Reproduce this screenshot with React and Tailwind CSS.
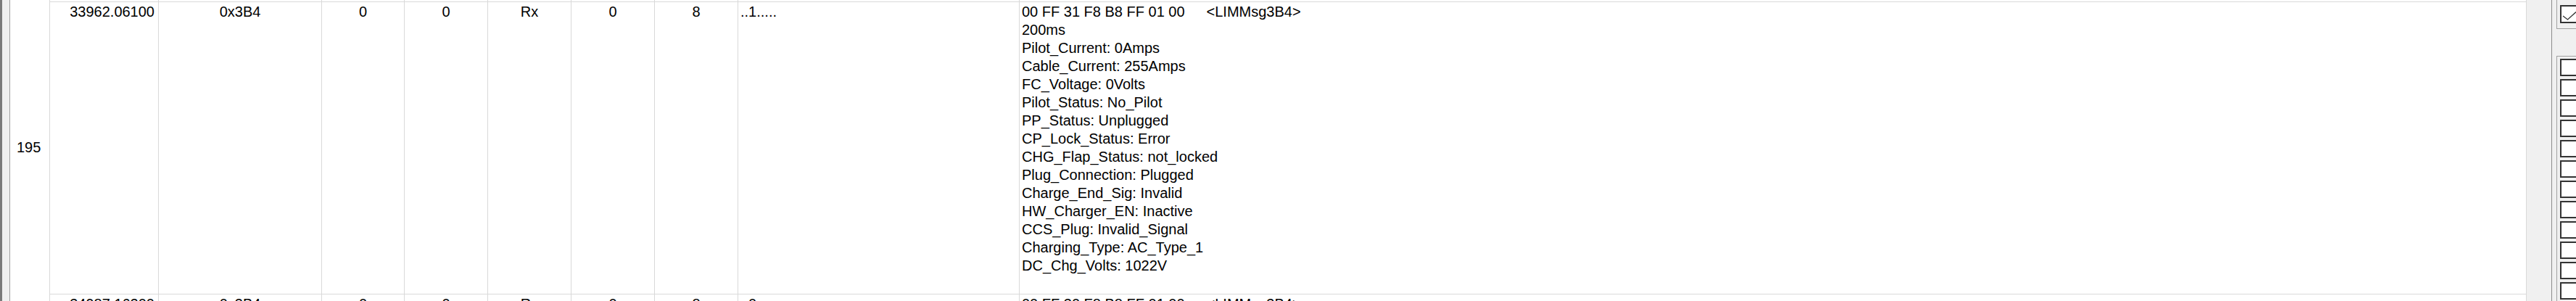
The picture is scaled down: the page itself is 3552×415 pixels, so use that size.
import React from 'react';

const cols = [
  { w: 'w-[150px]', align: 'justify-end pr-[5px]' },
  { w: 'w-[225px]', align: 'justify-center' },
  { w: 'w-[114px]', align: 'justify-center' },
  { w: 'w-[115px]', align: 'justify-center' },
  { w: 'w-[115px]', align: 'justify-center' },
  { w: 'w-[115px]', align: 'justify-center' },
  { w: 'w-[115px]', align: 'justify-center' },
  { w: 'w-[388px]', align: 'justify-start pl-[3px]' },
];

const prevRow = ['', '', '', '', '', '', '', ''];

const row195 = ['33962.06100', '0x3B4', '0', '0', 'Rx', '0', '8', '..1.....'];
const signals = [
  '200ms',
  'Pilot_Current: 0Amps',
  'Cable_Current: 255Amps',
  'FC_Voltage: 0Volts',
  'Pilot_Status: No_Pilot',
  'PP_Status: Unplugged',
  'CP_Lock_Status: Error',
  'CHG_Flap_Status: not_locked',
  'Plug_Connection: Plugged',
  'Charge_End_Sig: Invalid',
  'HW_Charger_EN: Inactive',
  'CCS_Plug: Invalid_Signal',
  'Charging_Type: AC_Type_1',
  'DC_Chg_Volts: 1022V',
];

const row196 = ['34987.16200', '0x3B4', '0', '0', 'Rx', '0', '8', '..0.....'];

function Row({ num, cells, data, height, top = true }) {
  return (
    <div className={`flex shrink-0 ${height}`}>
      {/* row header */}
      <div className="w-[55px] shrink-0 border-r border-[#d9d9d9] flex items-center pl-[9px]">
        {num}
      </div>
      <div className={`flex flex-1 ${top ? 'border-t border-[#d9d9d9]' : ''}`}>
        {cols.map((c, i) => (
          <div
            key={i}
            className={`${c.w} shrink-0 border-r border-[#d9d9d9] flex items-start pt-px ${c.align}`}
          >
            {cells[i]}
          </div>
        ))}
        <div className="flex-1 pl-[3px] pt-px border-r border-[#d9d9d9]">{data}</div>
      </div>
    </div>
  );
}

function Check({ checked, size = 'w-[25px] h-[25px]' }) {
  return (
    <div className={`${size} shrink-0 border-2 border-[#333333] bg-white`}>
      {checked && (
        <svg width="25" height="25" viewBox="0 0 25 25" className="-mt-[2px] -ml-[2px]">
          <polyline points="4,15 10.5,20 22,9.5" fill="none" stroke="#333333" strokeWidth="1.3" />
        </svg>
      )}
    </div>
  );
}

export default function App() {
  return (
    <div
      className="w-[3552px] h-[415px] overflow-hidden flex bg-white text-black text-[20px] leading-[25px]"
      style={{ fontFamily: '"Liberation Sans", Arial, sans-serif' }}
    >
      {/* left frame edge */}
      <div className="flex shrink-0 h-full">
        <div className="w-[3px] bg-[#7a7a7a]" />
        <div className="w-[10px] bg-[#f0f0f0]" />
        <div className="w-px bg-[#a0a0a0]" />
      </div>

      {/* grid */}
      <div className="w-[3470px] shrink-0 flex flex-col">
        <Row num="" cells={prevRow} data="" height="h-[2px]" top={false} />
        <Row
          num="195"
          cells={row195}
          height="h-[403px]"
          data={
            <div>
              <div className="whitespace-pre">
                00 FF 31 F8 B8 FF 01 00<span className="ml-[30px]">&lt;LIMMsg3B4&gt;</span>
              </div>
              {signals.map((s) => (
                <div key={s}>{s}</div>
              ))}
            </div>
          }
        />
        <Row
          num=""
          cells={row196}
          height="h-[40px]"
          data={
            <div className="whitespace-pre">
              00 FF 30 F8 B8 FF 01 00<span className="ml-[30px]">&lt;LIMMsg3B4&gt;</span>
            </div>
          }
        />
      </div>

      {/* right side panel */}
      <div className="flex-1 flex bg-[#f0f0f0] h-full">
        <div className="w-[34px] shrink-0" />
        <div className="w-px bg-[#8c8c8c]" />
        <div className="w-[6px] shrink-0" />
        <div className="flex-1 flex flex-col">
          <div className="h-[40px] shrink-0 border-l border-b border-[#a0a0a0] pl-[4px] pt-[7px] flex">
            <Check checked />
          </div>
          <div className="h-[37px] shrink-0" />
          <div className="flex-1 border-l border-t border-[#a0a0a0] pl-[4px] pt-[3px] flex flex-col gap-[4px]">
            {Array.from({ length: 12 }).map((_, i) => (
              <Check key={i} size="w-[25px] h-[24px]" />
            ))}
          </div>
        </div>
      </div>
    </div>
  );
}
